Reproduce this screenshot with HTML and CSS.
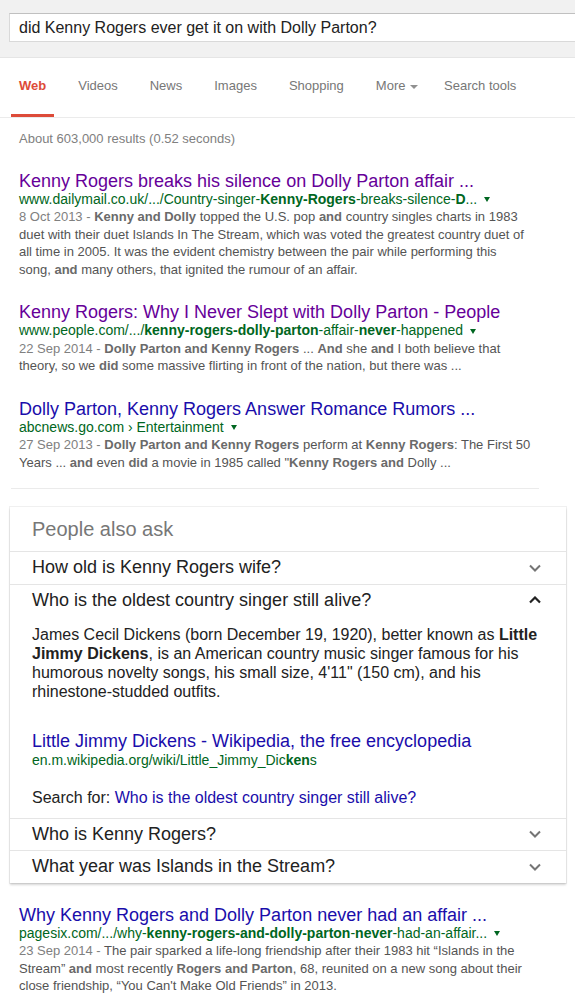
FILE: index.html
```html
<!DOCTYPE html>
<html lang="en">
<head>
  <meta charset="UTF-8" />
  <title>did Kenny Rogers ever get it on with Dolly Parton? - Search</title>
  <meta name="viewport" content="width=device-width, initial-scale=1.0" />
  <link rel="stylesheet" href="styles.css">
</head>
<body>
  <div class="header">
    <div class="searchbox">did Kenny Rogers ever get it on with Dolly Parton?</div>
  </div>

  <div class="tabs">
    <span class="tab active">Web</span>
    <span class="tab">Videos</span>
    <span class="tab">News</span>
    <span class="tab">Images</span>
    <span class="tab">Shopping</span>
    <span class="tab">More <span class="more-arrow"></span></span>
    <span class="tab tools">Search tools</span>
  </div>

  <div class="stats">About 603,000 results (0.52 seconds)</div>

  <div class="results">
    <div class="result">
      <div class="result-title visited">Kenny Rogers breaks his silence on Dolly Parton affair ...</div>
      <div class="result-url">www.dailymail.co.uk/.../Country-singer-<b>Kenny-Rogers</b>-breaks-silence-<b>D</b>... <span class="arrow"></span></div>
      <div class="snippet"><span class="date">8 Oct 2013 - </span><b>Kenny and Dolly</b> topped the U.S. pop <b>and</b> country singles charts in 1983 duet with their duet Islands In The Stream, which was voted the greatest country duet of all time in 2005. It was the evident chemistry between the pair while performing this song, <b>and</b> many others, that ignited the rumour of an affair.</div>
    </div>

    <div class="result">
      <div class="result-title visited">Kenny Rogers: Why I Never Slept with Dolly Parton - People</div>
      <div class="result-url">www.people.com/.../<b>kenny-rogers-dolly-parton</b>-affair-<b>never</b>-happened <span class="arrow"></span></div>
      <div class="snippet"><span class="date">22 Sep 2014 - </span><b>Dolly Parton and Kenny Rogers</b> ... <b>And</b> she <b>and</b> I both believe that theory, so we <b>did</b> some massive flirting in front of the nation, but there was ...</div>
    </div>

    <div class="result">
      <div class="result-title">Dolly Parton, Kenny Rogers Answer Romance Rumors ...</div>
      <div class="result-url">abcnews.go.com › Entertainment <span class="arrow"></span></div>
      <div class="snippet"><span class="date">27 Sep 2013 - </span><b>Dolly Parton and Kenny Rogers</b> perform at <b>Kenny Rogers</b>: The First 50 Years ... <b>and</b> even <b>did</b> a movie in 1985 called "<b>Kenny Rogers and</b> Dolly ...</div>
    </div>
  </div>

  <div class="separator"></div>

  <div class="card">
    <div class="card-head">People also ask</div>

    <div class="question">
      <span>How old is Kenny Rogers wife?</span>
      <svg class="chevron" width="12" height="8" viewBox="0 0 12 8"><polyline points="1,1.5 6,6.5 11,1.5" fill="none" stroke="#757575" stroke-width="2"/></svg>
    </div>

    <div class="question">
      <span>Who is the oldest country singer still alive?</span>
      <svg class="chevron" width="12" height="8" viewBox="0 0 12 8"><polyline points="1,6.5 6,1.5 11,6.5" fill="none" stroke="#222" stroke-width="2.2"/></svg>
    </div>
    <div class="answer">
      <p>James Cecil Dickens (born December 19, 1920), better known as <b>Little Jimmy Dickens</b>, is an American country music singer famous for his humorous novelty songs, his small size, 4'11" (150 cm), and his rhinestone-studded outfits.</p>
      <div class="answer-link">Little Jimmy Dickens - Wikipedia, the free encyclopedia</div>
      <div class="answer-url">en.m.wikipedia.org/wiki/Little_Jimmy_Dic<b>ken</b>s</div>
      <div class="search-for">Search for: <span class="blue">Who is the oldest country singer still alive?</span></div>
    </div>

    <div class="question">
      <span>Who is Kenny Rogers?</span>
      <svg class="chevron" width="12" height="8" viewBox="0 0 12 8"><polyline points="1,1.5 6,6.5 11,1.5" fill="none" stroke="#757575" stroke-width="2"/></svg>
    </div>

    <div class="question">
      <span>What year was Islands in the Stream?</span>
      <svg class="chevron" width="12" height="8" viewBox="0 0 12 8"><polyline points="1,1.5 6,6.5 11,1.5" fill="none" stroke="#757575" stroke-width="2"/></svg>
    </div>
  </div>

  <div class="results after-card">
    <div class="result">
      <div class="result-title">Why Kenny Rogers and Dolly Parton never had an affair ...</div>
      <div class="result-url">pagesix.com/.../why-<b>kenny-rogers-and-dolly-parton</b>-<b>never</b>-had-an-affair... <span class="arrow"></span></div>
      <div class="snippet"><span class="date">23 Sep 2014 - </span>The pair sparked a life-long friendship after their 1983 hit “Islands in the Stream” <b>and</b> most recently <b>Rogers and Parton</b>, 68, reunited on a new song about their close friendship, “You Can't Make Old Friends” in 2013.</div>
    </div>
  </div>
</body>
</html>
```

FILE: styles.css
```css
body {
  font-family: "Liberation Sans", Arial, sans-serif;
  background-color: white;
  color: #222;
  margin: 0;
  padding: 0;
  overflow-x: hidden;
}
.header {
  background-color: #f1f1f1;
  height: 57px;
  border-bottom: 1px solid #e5e5e5;
  overflow: hidden;
}
.searchbox {
  margin: 13px 0 0 9px;
  width: 620px;
  height: 27px;
  line-height: 28px;
  padding-left: 9px;
  background-color: white;
  border: 1px solid #d9d9d9;
  border-top-color: #c0c0c0;
  font-size: 16px;
  color: #222;
  white-space: nowrap;
}
.tabs {
  display: flex;
  gap: 16px;
  padding-left: 11px;
  border-bottom: 1px solid #ebebeb;
}
.tab {
  height: 56px;
  line-height: 56px;
  padding: 0 8px;
  font-size: 13px;
  color: #777;
  border-bottom: 3px solid transparent;
}
.tab.active {
  color: #dd4b39;
  font-weight: bold;
  border-bottom-color: #dd4b39;
}
.tab.tools {
  margin-left: -6px;
}
.more-arrow {
  display: inline-block;
  width: 0;
  height: 0;
  margin-left: 1px;
  vertical-align: middle;
  border-top: 4px solid #909090;
  border-left: 4px solid transparent;
  border-right: 4px solid transparent;
}
.stats {
  margin: 12px 0 0 19px;
  font-size: 13px;
  line-height: 17.5px;
  color: #808080;
}
.results {
  width: 528px;
  margin: 23px 0 0 11px;
}
.result {
  padding: 0 8px;
  margin-bottom: 24px;
}
.result:last-child {
  margin-bottom: 17px;
}
.result-title {
  font-size: 18px;
  line-height: 20px;
  color: #1a0dab;
  white-space: nowrap;
}
.result-title.visited {
  color: #609;
}
.result-url {
  font-size: 14px;
  line-height: 17.5px;
  color: #006621;
  white-space: nowrap;
}
.arrow {
  display: inline-block;
  width: 0;
  height: 0;
  margin-left: 3px;
  vertical-align: middle;
  border-top: 5px solid #006621;
  border-left: 3px solid transparent;
  border-right: 3px solid transparent;
}
.snippet {
  font-size: 13px;
  line-height: 17.5px;
  color: #545454;
}
.snippet b {
  color: #6a6a6a;
}
.date {
  color: #808080;
}
.separator {
  width: 528px;
  margin-left: 11px;
  border-top: 1px solid #ebebeb;
}
.card {
  margin: 18px 9px 0 10px;
  background-color: white;
  box-shadow: 0 2px 2px 0 rgba(0,0,0,0.16), 0 0 0 1px rgba(0,0,0,0.06);
}
.card-head {
  height: 44px;
  line-height: 44px;
  padding-left: 22px;
  font-size: 20px;
  color: #777;
}
.question {
  display: flex;
  justify-content: space-between;
  align-items: center;
  height: 31.5px;
  padding: 0 25px 0 22px;
  border-top: 1px solid #e5e5e5;
  font-size: 18px;
  color: #222;
}
.chevron {
  display: block;
}
.answer {
  padding: 9px 22px 10.5px;
  font-size: 16px;
  line-height: 19px;
  color: #222;
}
.answer p {
  margin: 0;
  width: 510px;
}
.answer-link {
  margin-top: 29.5px;
  font-size: 18px;
  line-height: 20px;
  color: #1a0dab;
}
.answer-url {
  font-size: 14px;
  color: #006621;
}
.search-for {
  margin-top: 18.5px;
}
.blue {
  color: #1a0dab;
}
.after-card {
  margin-top: 22px;
}
```
